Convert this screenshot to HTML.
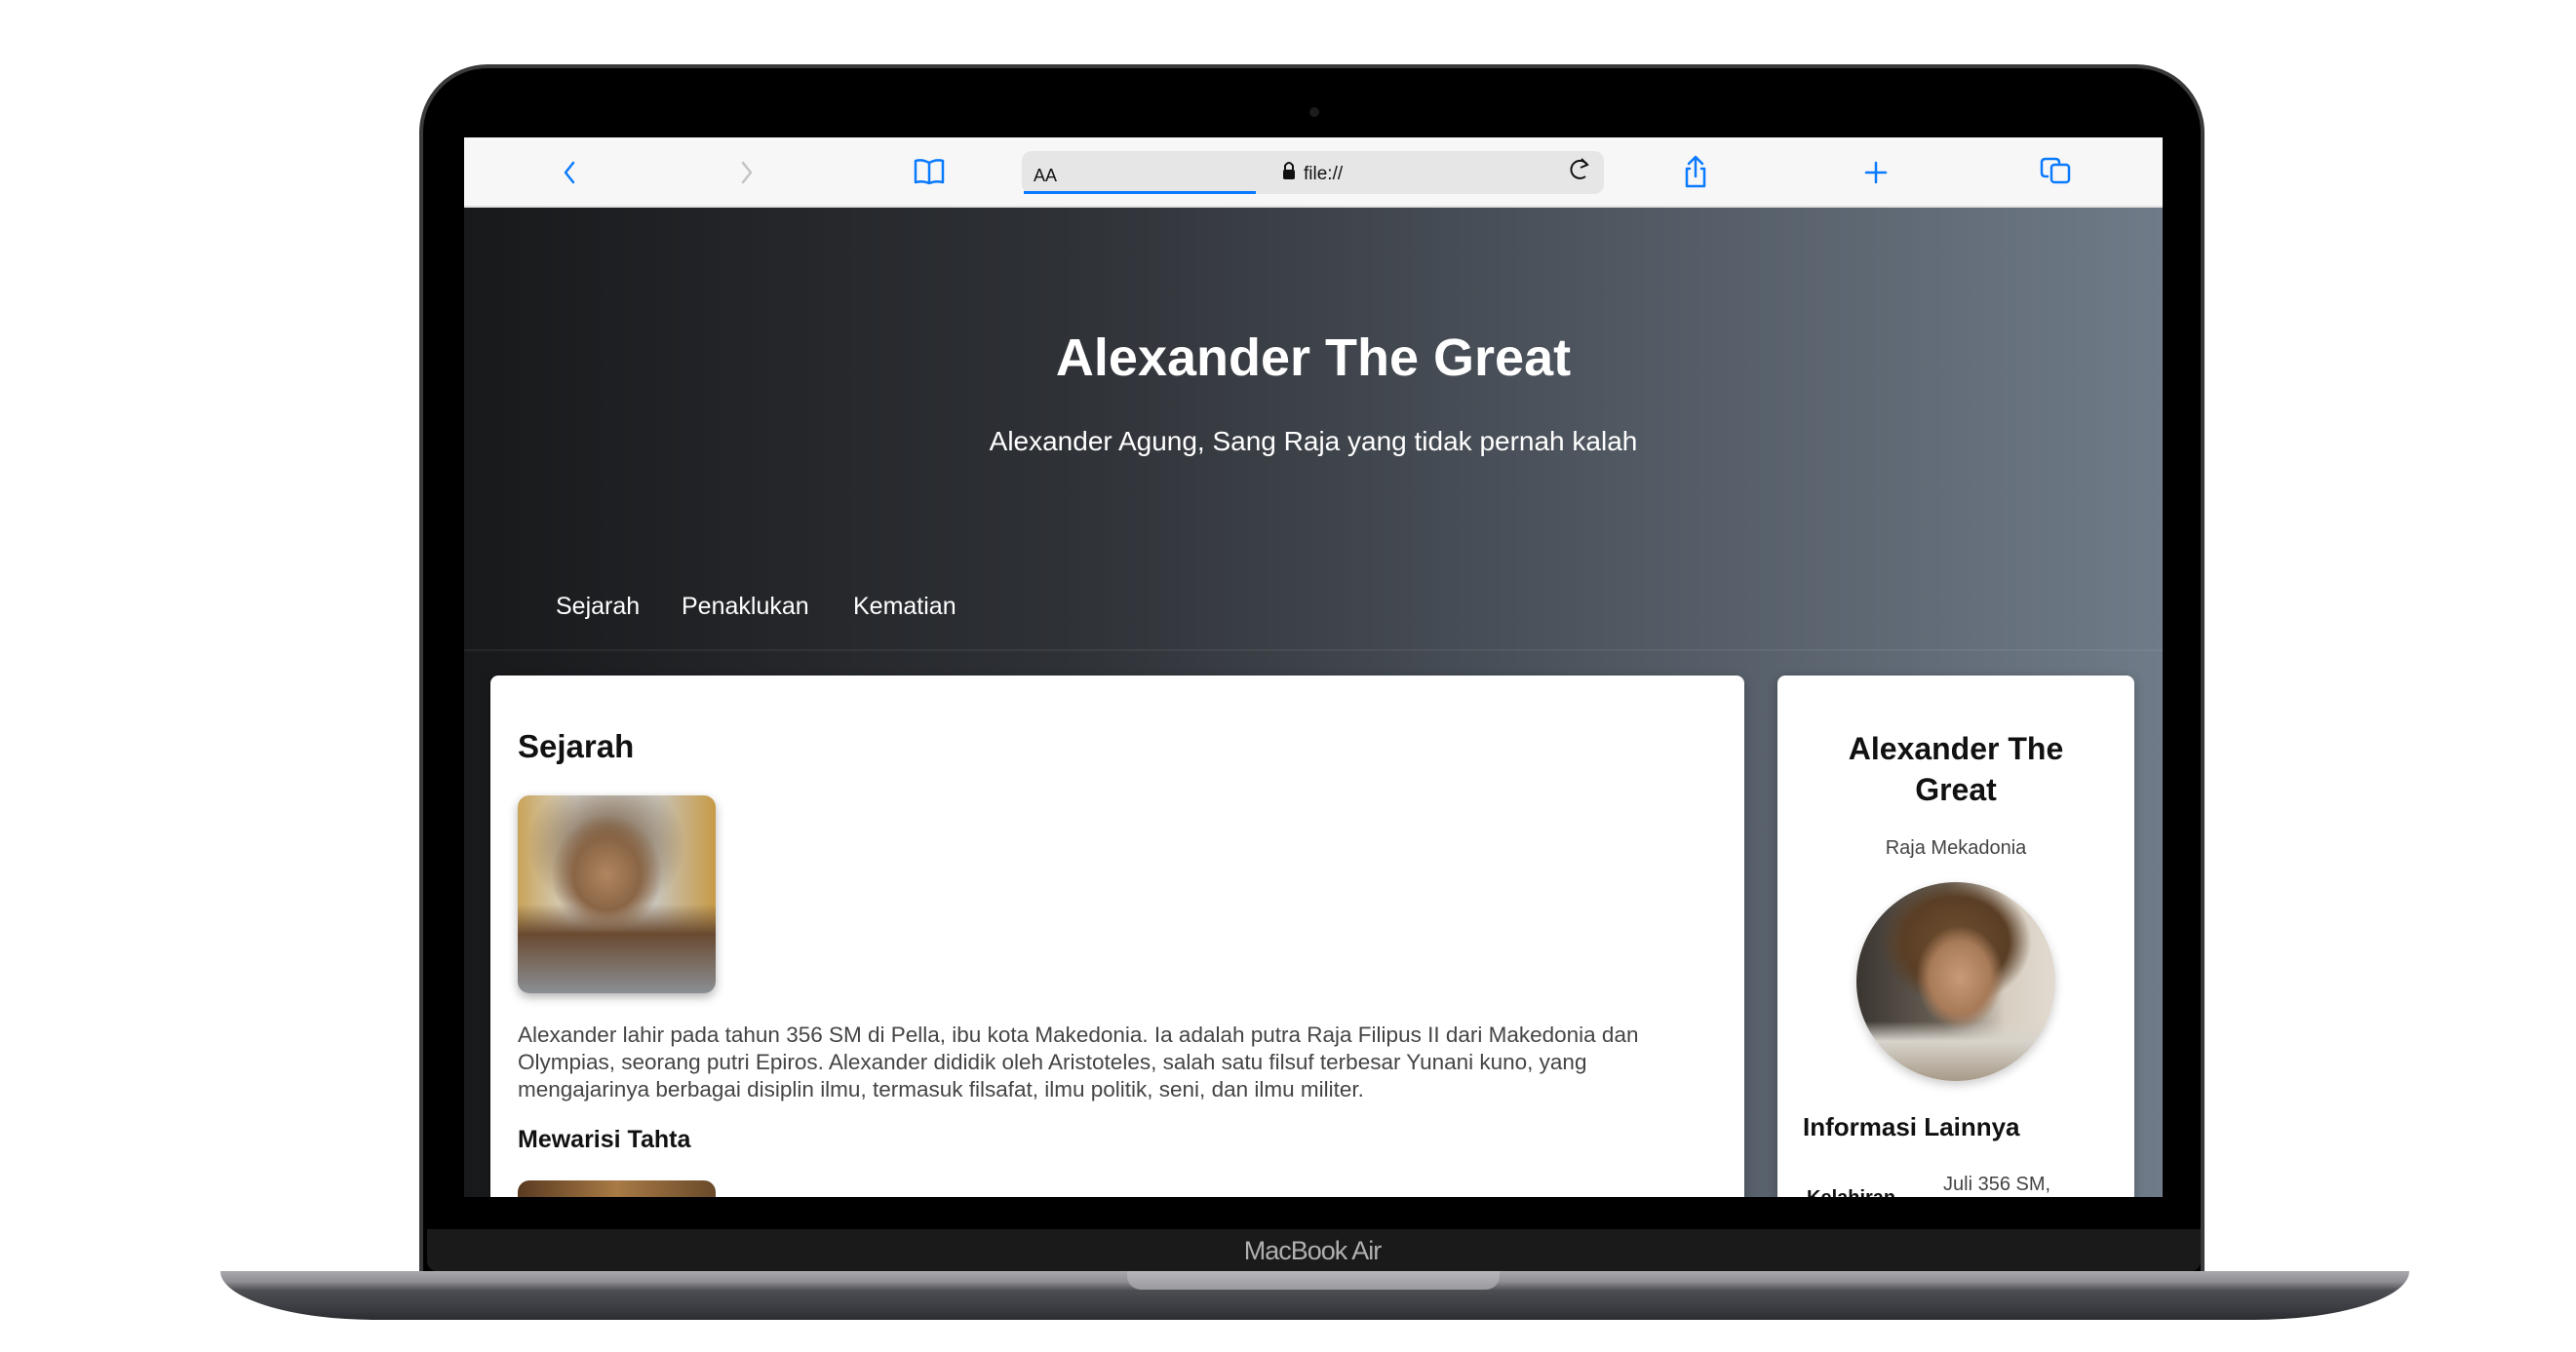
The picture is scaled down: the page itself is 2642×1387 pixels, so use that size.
<!DOCTYPE html>
<html><head><meta charset="utf-8"><style>
*{margin:0;padding:0;box-sizing:border-box}
body{width:2642px;height:1387px;background:#fff;position:relative;overflow:hidden;font-family:"Liberation Sans",sans-serif}
.abs{position:absolute}
#bezel{left:430px;top:66px;width:1831px;height:1240px;background:#000;border-radius:70px 70px 0 0;border:4px solid #3a3a3c;border-bottom:none}
#screen{left:476px;top:141px;width:1742px;height:1087px;overflow:hidden;background:linear-gradient(90deg,#18191b 0%,#2e3136 35%,#525a64 70%,#6f7b88 100%)}
#toolbar{left:0;top:0;width:1742px;height:72px;background:#f7f7f7;border-bottom:2px solid #e2e2e2}
.card{background:#fff;border-radius:8px;box-shadow:0 2px 10px rgba(0,0,0,.25)}
.t{white-space:nowrap;position:absolute}
</style></head><body>
<div id="bezel" class="abs"></div>
<div class="abs" style="left:1343px;top:110px;width:10px;height:10px;border-radius:50%;background:#1c1c1e"></div>
<div class="abs" style="left:438px;top:1261px;width:1819px;height:43px;background:#1a1a1a;border-radius:0 0 10px 10px"></div>
<div class="t" style="left:1146px;width:400px;text-align:center;top:1268px;font-size:27px;color:#b0b0b0;letter-spacing:-1px">MacBook Air</div>
<div class="abs" style="left:226px;top:1304px;width:2245px;height:50px;background:linear-gradient(#a9a9ae 0%,#8d8d92 22%,#4c4d52 40%,#3a3b40 80%,#2a2b2f 100%);border-radius:0 0 160px 160px/0 0 50px 50px"></div>
<div class="abs" style="left:1156px;top:1304px;width:382px;height:19px;background:linear-gradient(#b8b8bc,#9a9a9e);border-radius:0 0 14px 14px"></div>

<div id="screen" class="abs">
 <div id="toolbar" class="abs">
  <svg class="abs" style="left:0;top:0" width="1742" height="72">
   <g fill="none" stroke="#0a7aff" stroke-width="2.5" stroke-linecap="round" stroke-linejoin="round">
    <path d="M112 26 L104 36 L112 46"/>
    <path d="M286 26 L294 36 L286 46" stroke="#c4c4c4"/>
    <path d="M477 47 V26 Q470 22 463 24 V46 Q470 44 477 47 Q484 44 491 46 V24 Q484 22 477 26"/>
    <path d="M1263 20 V40 M1256 27 L1263 20 L1270 27 M1257 32 H1254 V50 H1272 V32 H1269"/>
    <path d="M1448 26 V46 M1438 36 H1458"/>
    <rect x="1628" y="28" width="18" height="18" rx="3"/>
    <path d="M1624 40 H1622 Q1618 40 1618 36 V26 Q1618 22 1622 22 H1632 Q1636 22 1636 26"/>
   </g>
   <rect x="572" y="14" width="597" height="44" rx="10" fill="#e6e6e6"/>
   <rect x="574" y="55" width="238" height="3" fill="#0a7aff"/>
   <text x="584" y="45" font-size="18" fill="#111">AA</text>
   <rect x="840" y="33" width="12" height="10" rx="2" fill="#111"/>
   <path d="M842 33 V29 Q846 23 850 29 V33" stroke="#111" stroke-width="2" fill="none"/>
   <text x="861" y="43" font-size="19" fill="#111">file://</text>
   <path d="M1156 28 A9 9 0 1 0 1154 40" transform="translate(-4,0)" fill="none" stroke="#111" stroke-width="2"/>
   <path d="M1146 22 L1152 28 L1145 31" fill="none" stroke="#111" stroke-width="2"/>
  </svg>
 </div>
 <div class="t" style="left:0;width:1742px;text-align:center;top:195px;font-size:54px;font-weight:bold;color:#fff">Alexander The Great</div>
 <div class="t" style="left:0;width:1742px;text-align:center;top:296px;font-size:28px;color:#fff">Alexander Agung, Sang Raja yang tidak pernah kalah</div>
 <div class="t" style="left:94px;top:467px;font-size:25px;color:#fff">Sejarah</div>
 <div class="t" style="left:223px;top:467px;font-size:25px;color:#fff">Penaklukan</div>
 <div class="t" style="left:399px;top:467px;font-size:25px;color:#fff">Kematian</div>
 <div class="abs" style="left:0;top:525px;width:1742px;height:2px;background:rgba(255,255,255,.06)"></div>

 <div class="abs card" style="left:27px;top:552px;width:1286px;height:600px">
  <div class="t" style="left:28px;top:54px;font-size:33px;font-weight:bold;color:#111">Sejarah</div>
  <div class="abs" style="left:28px;top:123px;width:203px;height:203px;border-radius:12px;box-shadow:0 4px 10px rgba(0,0,0,.3);background:radial-gradient(ellipse 28% 30% at 45% 40%,#b08660 0%,#8a6545 60%,transparent 100%),radial-gradient(ellipse 40% 35% at 45% 25%,#6b5035,transparent 100%),linear-gradient(180deg,transparent 55%,#6a4a30 70%,#8a8f94 100%),linear-gradient(90deg,#c9a45a,#d8d6d0 30%,#c8c4ba 70%,#c79a45)"></div>
  <div class="abs" style="left:28px;top:355px;width:1240px;white-space:nowrap;font-size:22.5px;line-height:28px;color:#444">Alexander lahir pada tahun 356 SM di Pella, ibu kota Makedonia. Ia adalah putra Raja Filipus II dari Makedonia dan<br>Olympias, seorang putri Epiros. Alexander dididik oleh Aristoteles, salah satu filsuf terbesar Yunani kuno, yang<br>mengajarinya berbagai disiplin ilmu, termasuk filsafat, ilmu politik, seni, dan ilmu militer.</div>
  <div class="t" style="left:28px;top:462px;font-size:25px;font-weight:bold;color:#111">Mewarisi Tahta</div>
  <div class="abs" style="left:28px;top:518px;width:203px;height:100px;border-radius:12px;background:linear-gradient(90deg,#5a3a20,#a87a45 50%,#6a4a2a)"></div>
 </div>

 <div class="abs card" style="left:1347px;top:552px;width:366px;height:600px">
  <div class="abs" style="left:0;width:366px;top:54px;text-align:center;font-size:32px;font-weight:bold;line-height:42px;color:#111">Alexander The<br>Great</div>
  <div class="t" style="left:0;width:366px;text-align:center;top:166px;font-size:20px;color:#444">Raja Mekadonia</div>
  <div class="abs" style="left:81px;top:212px;width:204px;height:204px;border-radius:50%;box-shadow:0 4px 10px rgba(0,0,0,.2);background:radial-gradient(ellipse 22% 26% at 52% 48%,#c89a78 0%,#a77a58 70%,transparent 100%),radial-gradient(ellipse 38% 32% at 50% 30%,#6e4f30 0%,#5a3e25 70%,transparent 100%),linear-gradient(180deg,transparent 70%,#d8d4cc 80%,#a79a88 100%),linear-gradient(90deg,#3a3530,#6a6258 45%,#d8cfc2 75%,#e2dad0)"></div>
  <div class="t" style="left:26px;top:448px;font-size:26px;font-weight:bold;color:#111">Informasi Lainnya</div>
  <div class="t" style="left:170px;top:511px;font-size:20px;color:#444">Juli 356 SM,</div>
  <div class="t" style="left:30px;top:525px;font-size:20px;font-weight:bold;color:#111">Kelahiran</div>
 </div>
</div>
</body></html>
